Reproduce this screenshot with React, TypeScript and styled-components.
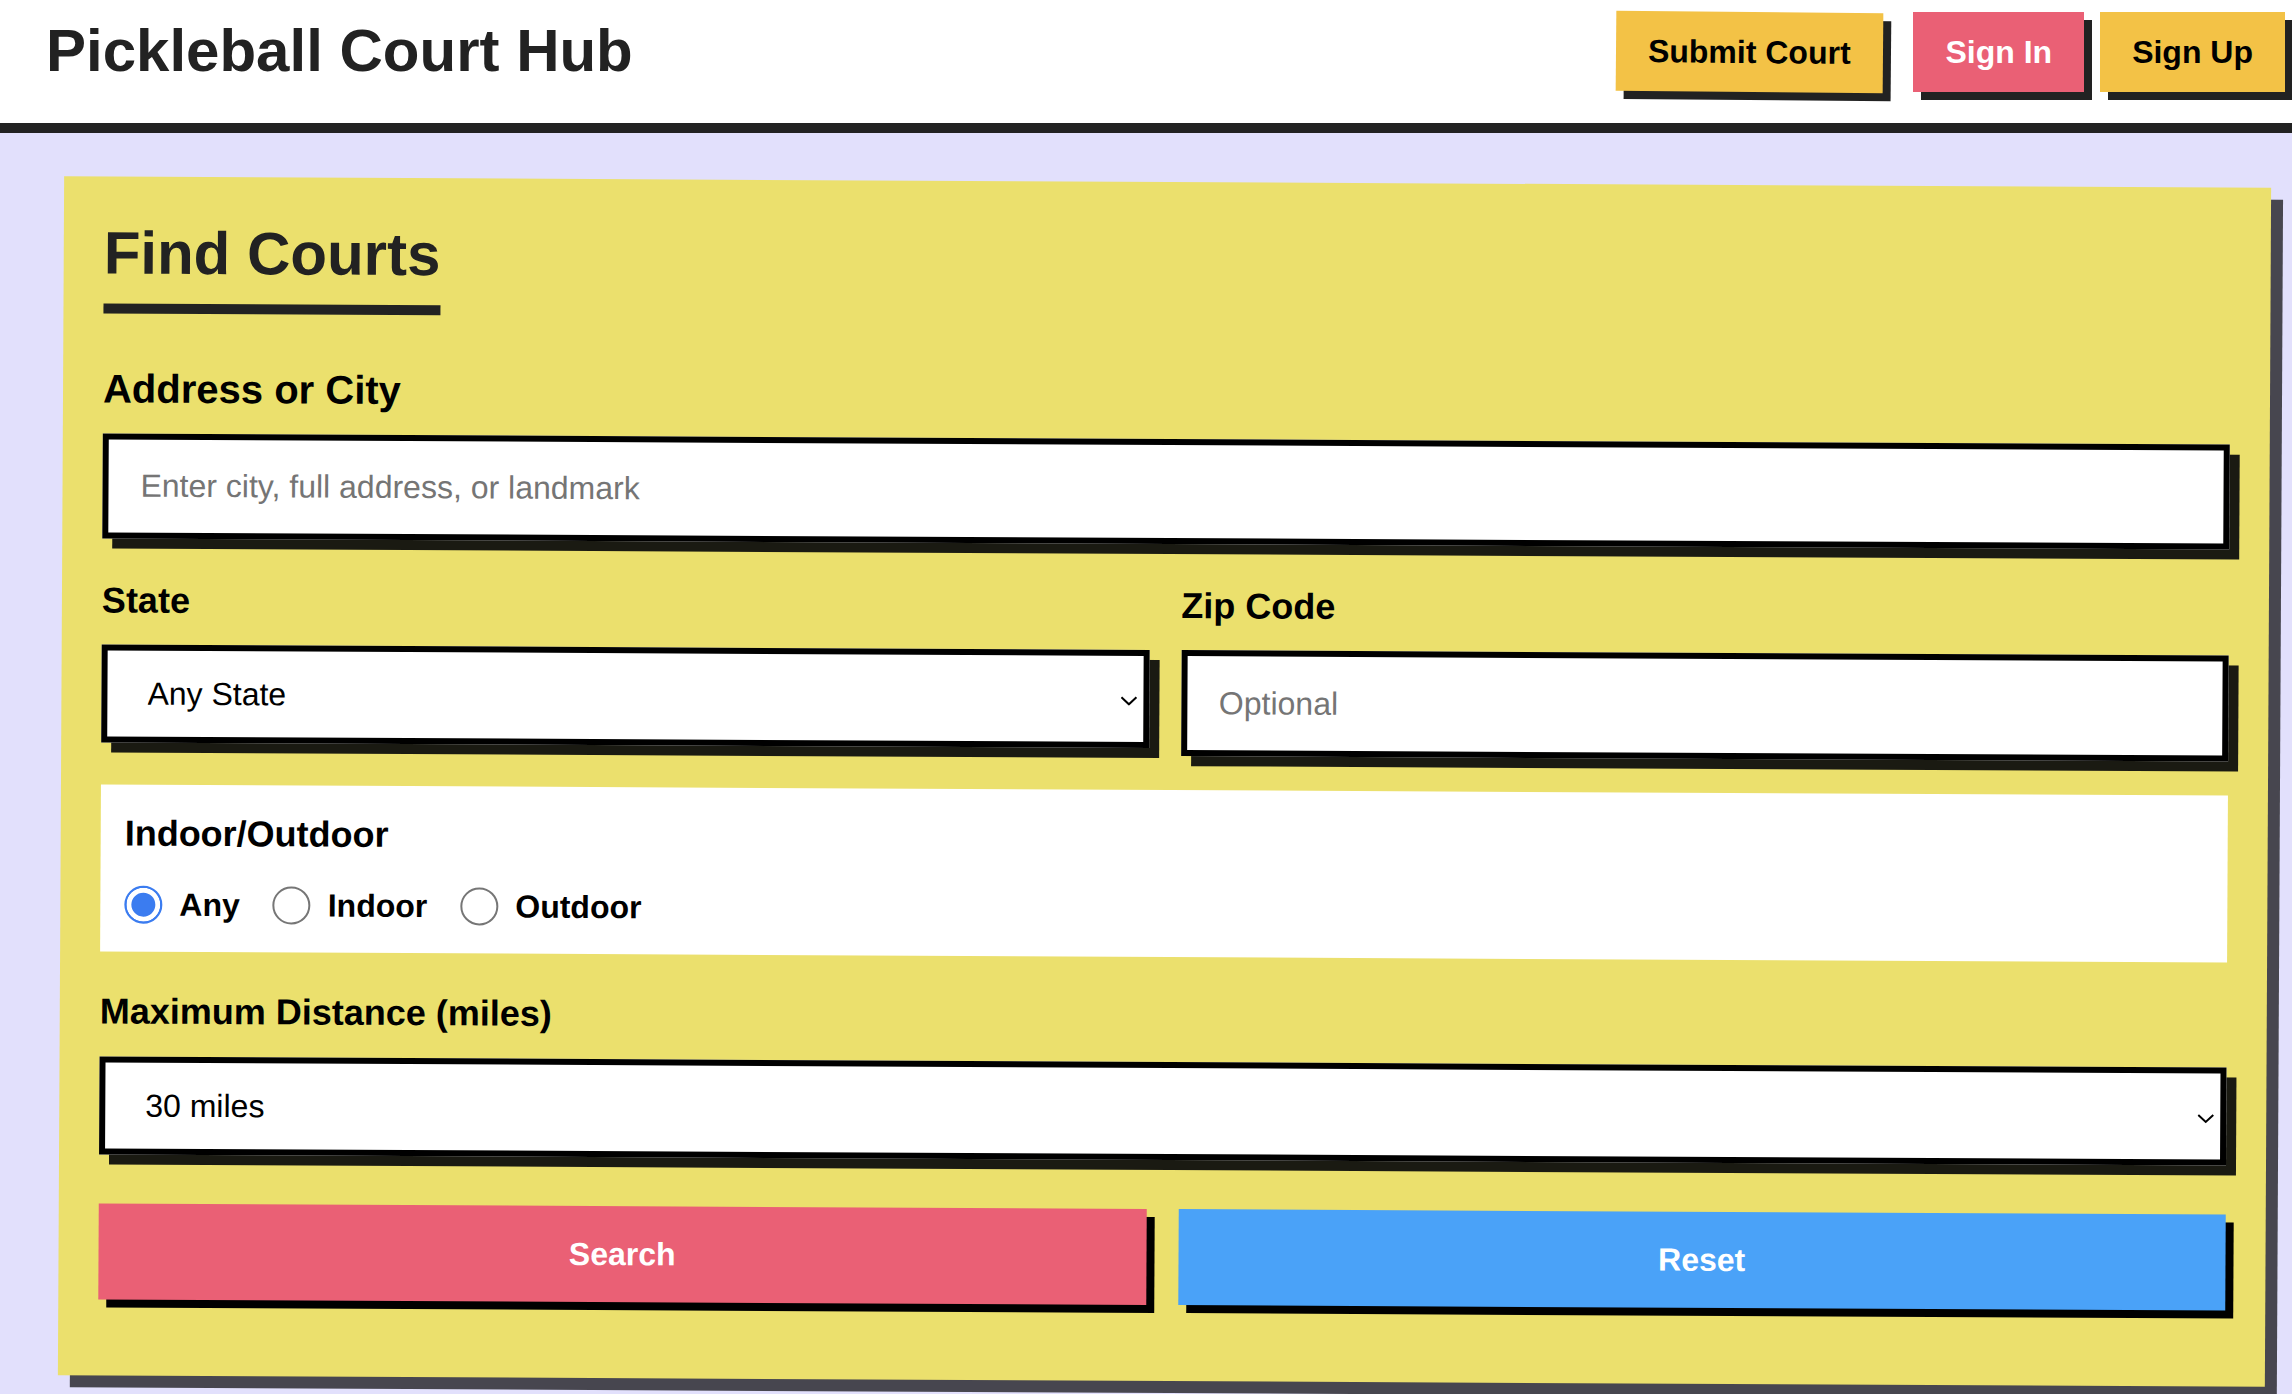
import React from "react";
import styled, { createGlobalStyle } from "styled-components";

const FONT = `"Liberation Sans", Arial, Helvetica, sans-serif`;

const GlobalStyle = createGlobalStyle`
  html, body {
    margin: 0;
    padding: 0;
    overflow: hidden;
    background: #e2e0fc;
  }
  body {
    font-family: ${FONT};
  }
  *, *::before, *::after {
    box-sizing: border-box;
  }
`;

const Page = styled.div`
  min-height: 1394px;
  background: #e2e0fc;
`;

const Header = styled.header`
  display: flex;
  justify-content: space-between;
  align-items: flex-start;
  height: 133px;
  padding: 12px 7px 0 46px;
  background: #ffffff;
  border-bottom: 10px solid #222222;
`;

const SiteTitle = styled.h1`
  margin: 4px 0 0;
  font-family: ${FONT};
  font-size: 60px;
  line-height: 69px;
  font-weight: 700;
  color: #222222;
`;

const Nav = styled.nav`
  display: flex;
  align-items: flex-start;
  gap: 16px;
`;

const NavButton = styled.button<{ $bg: string; $fg: string; $tilt?: number; $spaced?: boolean }>`
  height: 80px;
  padding: 0 32px;
  margin-right: ${(p) => (p.$spaced ? "15px" : "0")};
  border: none;
  border-radius: 0;
  background: ${(p) => p.$bg};
  color: ${(p) => p.$fg};
  font-family: ${FONT};
  font-size: 32px;
  font-weight: 700;
  line-height: 1;
  white-space: nowrap;
  box-shadow: 8px 8px 0 #222222;
  transform: rotate(${(p) => p.$tilt ?? 0}deg);
  cursor: pointer;
`;

const Main = styled.main`
  padding: 49px 24px 0 61px;
`;

const Card = styled.section`
  display: flex;
  flex-direction: column;
  width: 2207px;
  padding: 42px 40px 76px;
  background: #ebe06d;
  box-shadow: 12px 12px 0 #47464f;
  transform: rotate(0.3deg);
`;

const Heading = styled.h2`
  align-self: flex-start;
  margin: 0 0 52px;
  padding-bottom: 16px;
  border-bottom: 10px solid #222222;
  font-family: ${FONT};
  font-size: 60px;
  line-height: 69px;
  font-weight: 700;
  color: #222222;
`;

const Field = styled.div<{ $after?: number }>`
  display: flex;
  flex-direction: column;
  margin-bottom: ${(p) => p.$after ?? 0}px;
  min-width: 0;
`;

const Label = styled.label<{ $big?: boolean; $after?: number }>`
  display: block;
  margin-bottom: ${(p) => p.$after ?? 24}px;
  font-family: ${FONT};
  font-size: ${(p) => (p.$big ? 40 : 36)}px;
  line-height: ${(p) => (p.$big ? 46 : 41)}px;
  font-weight: 700;
  color: #000000;
`;

const TextInput = styled.input<{ $h: number }>`
  display: block;
  width: 100%;
  height: ${(p) => p.$h}px;
  margin: 0;
  padding: 0 32px;
  border: 6px solid #000000;
  border-radius: 0;
  outline: none;
  background: #ffffff;
  box-shadow: 10px 10px 0 #1a1a12;
  font-family: ${FONT};
  font-size: 32px;
  color: #000000;

  &::placeholder {
    color: #757575;
    opacity: 1;
  }
`;

const SelectWrap = styled.div`
  position: relative;
  width: 100%;
`;

const Select = styled.select`
  display: block;
  width: 100%;
  height: 98px;
  margin: 0;
  padding: 0 60px 0 40px;
  border: 6px solid #000000;
  border-radius: 0;
  outline: none;
  appearance: none;
  -webkit-appearance: none;
  background: #ffffff;
  box-shadow: 10px 10px 0 #1a1a12;
  font-family: ${FONT};
  font-size: 32px;
  color: #000000;
`;

const Chevron = styled.svg`
  position: absolute;
  right: 12px;
  top: 50%;
  width: 17px;
  height: 10px;
  margin-top: -3px;
  pointer-events: none;
`;

const Row = styled.div`
  display: grid;
  grid-template-columns: 1fr 1fr;
  column-gap: 32px;
  align-items: start;
  margin-bottom: 34px;
`;

const Panel = styled.fieldset`
  margin: 0 0 39px;
  padding: 28px 24px;
  border: none;
  background: #ffffff;
  min-width: 0;
`;

const PanelLegend = styled.div`
  margin-bottom: 32px;
  font-family: ${FONT};
  font-size: 36px;
  line-height: 41px;
  font-weight: 700;
  color: #000000;
`;

const RadioRow = styled.div`
  display: flex;
  align-items: center;
  gap: 33px;
  height: 38px;
`;

const RadioOption = styled.label`
  display: flex;
  align-items: center;
  gap: 17px;
  font-family: ${FONT};
  font-size: 32px;
  font-weight: 700;
  color: #000000;
  cursor: pointer;
`;

const Radio = styled.input`
  appearance: none;
  -webkit-appearance: none;
  width: 38px;
  height: 38px;
  margin: 0;
  border: 2px solid #767676;
  border-radius: 50%;
  background: #ffffff;

  &:checked {
    border-color: #3b7cf0;
    background: #3b7cf0;
    box-shadow: inset 0 0 0 5px #ffffff;
  }
`;

const ButtonRow = styled.div`
  display: grid;
  grid-template-columns: 1fr 1fr;
  column-gap: 32px;
`;

const ActionButton = styled.button<{ $bg: string }>`
  height: 96px;
  margin: 0;
  border: none;
  border-radius: 0;
  background: ${(p) => p.$bg};
  color: #ffffff;
  font-family: ${FONT};
  font-size: 32px;
  font-weight: 700;
  box-shadow: 8px 8px 0 #000000;
  cursor: pointer;
`;

const ChevronIcon = () => (
  <Chevron viewBox="0 0 17 10" aria-hidden="true">
    <path d="M1 1.5 L8.5 8.5 L16 1.5" fill="none" stroke="#000" strokeWidth="2" />
  </Chevron>
);

export default function App() {
  return (
    <Page>
      <GlobalStyle />
      <Header>
        <SiteTitle>Pickleball Court Hub</SiteTitle>
        <Nav>
          <NavButton $bg="#f3c246" $fg="#000000" $tilt={0.5} $spaced>
            Submit Court
          </NavButton>
          <NavButton $bg="#ea6075" $fg="#ffffff">
            Sign In
          </NavButton>
          <NavButton $bg="#f3c246" $fg="#000000">
            Sign Up
          </NavButton>
        </Nav>
      </Header>
      <Main>
        <Card>
          <Heading>Find Courts</Heading>

          <Field $after={41}>
            <Label $big $after={22} htmlFor="address">
              Address or City
            </Label>
            <TextInput
              id="address"
              $h={105}
              placeholder="Enter city, full address, or landmark"
            />
          </Field>

          <Row>
            <Field>
              <Label htmlFor="state">State</Label>
              <SelectWrap>
                <Select id="state" defaultValue="any">
                  <option value="any">Any State</option>
                </Select>
                <ChevronIcon />
              </SelectWrap>
            </Field>
            <Field>
              <Label htmlFor="zip">Zip Code</Label>
              <TextInput id="zip" $h={106} placeholder="Optional" />
            </Field>
          </Row>

          <Panel>
            <PanelLegend>Indoor/Outdoor</PanelLegend>
            <RadioRow>
              <RadioOption>
                <Radio type="radio" name="setting" defaultChecked />
                Any
              </RadioOption>
              <RadioOption>
                <Radio type="radio" name="setting" />
                Indoor
              </RadioOption>
              <RadioOption>
                <Radio type="radio" name="setting" />
                Outdoor
              </RadioOption>
            </RadioRow>
          </Panel>

          <Field $after={49}>
            <Label htmlFor="distance" $after={25}>
              Maximum Distance (miles)
            </Label>
            <SelectWrap>
              <Select id="distance" defaultValue="30">
                <option value="30">30 miles</option>
              </Select>
              <ChevronIcon />
            </SelectWrap>
          </Field>

          <ButtonRow>
            <ActionButton $bg="#ea6075">Search</ActionButton>
            <ActionButton $bg="#4aa2f8">Reset</ActionButton>
          </ButtonRow>
        </Card>
      </Main>
    </Page>
  );
}
